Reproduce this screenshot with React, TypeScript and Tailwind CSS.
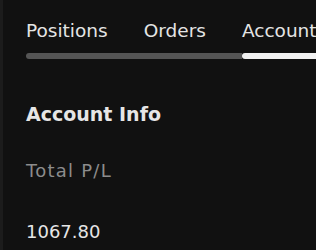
export default function App() {
  return (
    <div className="w-[316px] h-[250px] bg-[#111111] border-l-[3px] border-[#1c1c1c] overflow-hidden" style={{ fontFamily: '"DejaVu Sans", sans-serif' }}>
      <div className="pl-[23px] pt-[20px]">
        <div className="flex gap-[36px] text-[18.5px] text-[#e4e4e4] whitespace-nowrap leading-[22px]">
          <span>Positions</span>
          <span>Orders</span>
          <span>Account</span>
        </div>
        <div className="mt-[11px] flex h-[6px]">
          <div className="w-[216px] bg-[#555555] rounded-l-full" />
          <div className="flex-1 bg-[#f2f2f2] rounded-l-full" />
        </div>
        <div className="mt-[43px] text-[19px] font-bold text-[#e6e6e6] leading-[24px]">Account Info</div>
        <div className="mt-[34px] text-[18px] text-[#8c8c8c] leading-[22px] tracking-[1.25px]">Total P/L</div>
        <div className="mt-[39px] text-[18px] text-[#e6e6e6] leading-[22px]">1067.80</div>
      </div>
    </div>
  );
}
